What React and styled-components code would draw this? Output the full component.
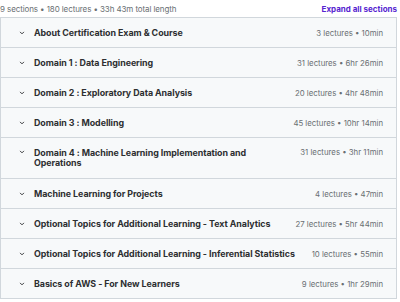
import styled, { createGlobalStyle } from 'styled-components'

const GlobalStyle = createGlobalStyle`
    body {
        margin: 0;
        background: #fff;
        font-family: Inter, "Noto Sans", sans-serif;
        color: #2d2f31;
    }
`

const Page = styled.div`
    width: 397px;
    padding-top: 1px;
`

const Header = styled.div`
    display: flex;
    justify-content: space-between;
    align-items: center;
    height: 15px;
    margin-bottom: 1px;
`

const Summary = styled.span`
    font-size: 8px;
    color: #6a6f73;
    letter-spacing: -0.1px;
`

const ExpandLink = styled.span`
    font-size: 8px;
    font-weight: 700;
    color: #5624d0;
`

const Sections = styled.div`
    border: 1px solid #d1d7dc;
    border-bottom: none;
`

const Row = styled.div`
    display: flex;
    align-items: center;
    min-height: ${p => p.$tall ? 40 : 29}px;
    padding: 0 13px 0 17px;
    background: #f7f9fa;
    border-bottom: 1px solid #d1d7dc;
`

const Chevron = styled.svg`
    flex: none;
    width: 8px;
    height: 8px;
    margin-right: 8px;
    align-self: ${p => p.$top ? 'flex-start' : 'center'};
    margin-top: ${p => p.$top ? 10 : 0}px;
`

const Title = styled.div`
    flex: 1;
    font-size: 8.9px;
    font-weight: 700;
    line-height: 10px;
    letter-spacing: -0.05px;
    max-width: ${p => p.$wrap ? '225px' : 'none'};
`

const Meta = styled.div`
    flex: none;
    margin-left: auto;
    padding-left: 8px;
    font-size: 7.8px;
    color: #6a6f73;
    align-self: ${p => p.$top ? 'flex-start' : 'center'};
    margin-top: ${p => p.$top ? 9 : 0}px;
`

const sections = [
    { title: 'About Certification Exam & Course', meta: '3 lectures • 10min' },
    { title: 'Domain 1 : Data Engineering', meta: '31 lectures • 6hr 26min' },
    { title: 'Domain 2 : Exploratory Data Analysis', meta: '20 lectures • 4hr 48min' },
    { title: 'Domain 3 : Modelling', meta: '45 lectures • 10hr 14min' },
    { title: 'Domain 4 : Machine Learning Implementation and Operations', meta: '31 lectures • 3hr 11min', tall: true },
    { title: 'Machine Learning for Projects', meta: '4 lectures • 47min' },
    { title: 'Optional Topics for Additional Learning - Text Analytics', meta: '27 lectures • 5hr 44min' },
    { title: 'Optional Topics for Additional Learning - Inferential Statistics', meta: '10 lectures • 55min' },
    { title: 'Basics of AWS - For New Learners', meta: '9 lectures • 1hr 29min' },
]

export default function App() {
    return (
        <Page>
            <GlobalStyle />
            <Header>
                <Summary>9 sections • 180 lectures • 33h 43m total length</Summary>
                <ExpandLink>Expand all sections</ExpandLink>
            </Header>
            <Sections>
                {sections.map(s => (
                    <Row key={s.title} $tall={s.tall}>
                        <Chevron viewBox="0 0 24 24" $top={s.tall}>
                            <path d="M7 9.5l5 5 5-5" fill="none" stroke="#2d2f31" strokeWidth="2.8" strokeLinecap="round" strokeLinejoin="round" />
                        </Chevron>
                        <Title $wrap={s.tall}>{s.title}</Title>
                        <Meta $top={s.tall}>{s.meta}</Meta>
                    </Row>
                ))}
            </Sections>
        </Page>
    )
}
